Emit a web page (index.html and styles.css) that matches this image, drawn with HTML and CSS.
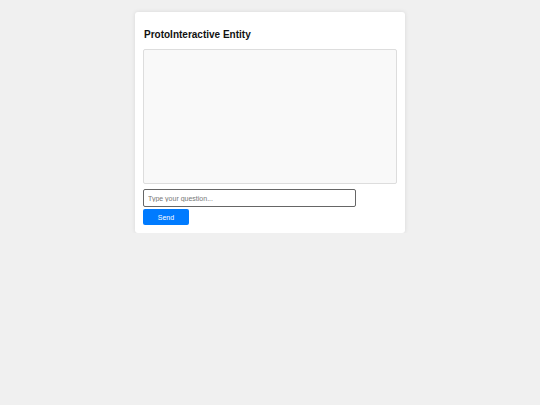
FILE: index.html
```html
<!DOCTYPE html>
<html>
<head>
<meta charset="utf-8">
<link rel="stylesheet" href="styles.css">
</head>
<body>
<div class="card">
  <h1 class="title">ProtoInteractive Entity</h1>
  <div class="chat"></div>
  <input class="question" type="text" placeholder="Type your question...">
  <button class="send">Send</button>
</div>
</body>
</html>
```
FILE: styles.css
```css
html, body {
  margin: 0;
  padding: 0;
  background: #f0f0f0;
  font-family: "Liberation Sans", Arial, sans-serif;
}
.card {
  width: 270px;
  box-sizing: border-box;
  margin: 12px auto 0;
  padding: 8px;
  background: #ffffff;
  border-radius: 3px;
  box-shadow: 0 0 4px rgba(0,0,0,0.1);
  display: flex;
  flex-direction: column;
  align-items: flex-start;
}
.title {
  font-size: 10px;
  line-height: 12px;
  font-weight: bold;
  color: #111;
  margin: 9px 0 8px 1px;
}
.chat {
  width: 100%;
  height: 135px;
  box-sizing: border-box;
  border: 1px solid #dddddd;
  border-radius: 2px;
  background: #f9f9f9;
}
.question {
  margin-top: 5px;
  width: 213px;
  height: 18px;
  box-sizing: border-box;
  border: 1px solid #666;
  border-radius: 2px;
  padding: 0 4px;
  font-family: "Liberation Sans", Arial, sans-serif;
  font-size: 7px;
  outline: none;
}
.question::placeholder {
  color: #777;
}
.send {
  margin-top: 2px;
  width: 46px;
  height: 16px;
  border: none;
  border-radius: 2px;
  background: #007bff;
  color: #fff;
  font-family: "Liberation Sans", Arial, sans-serif;
  font-size: 7px;
  padding: 0;
}
```
